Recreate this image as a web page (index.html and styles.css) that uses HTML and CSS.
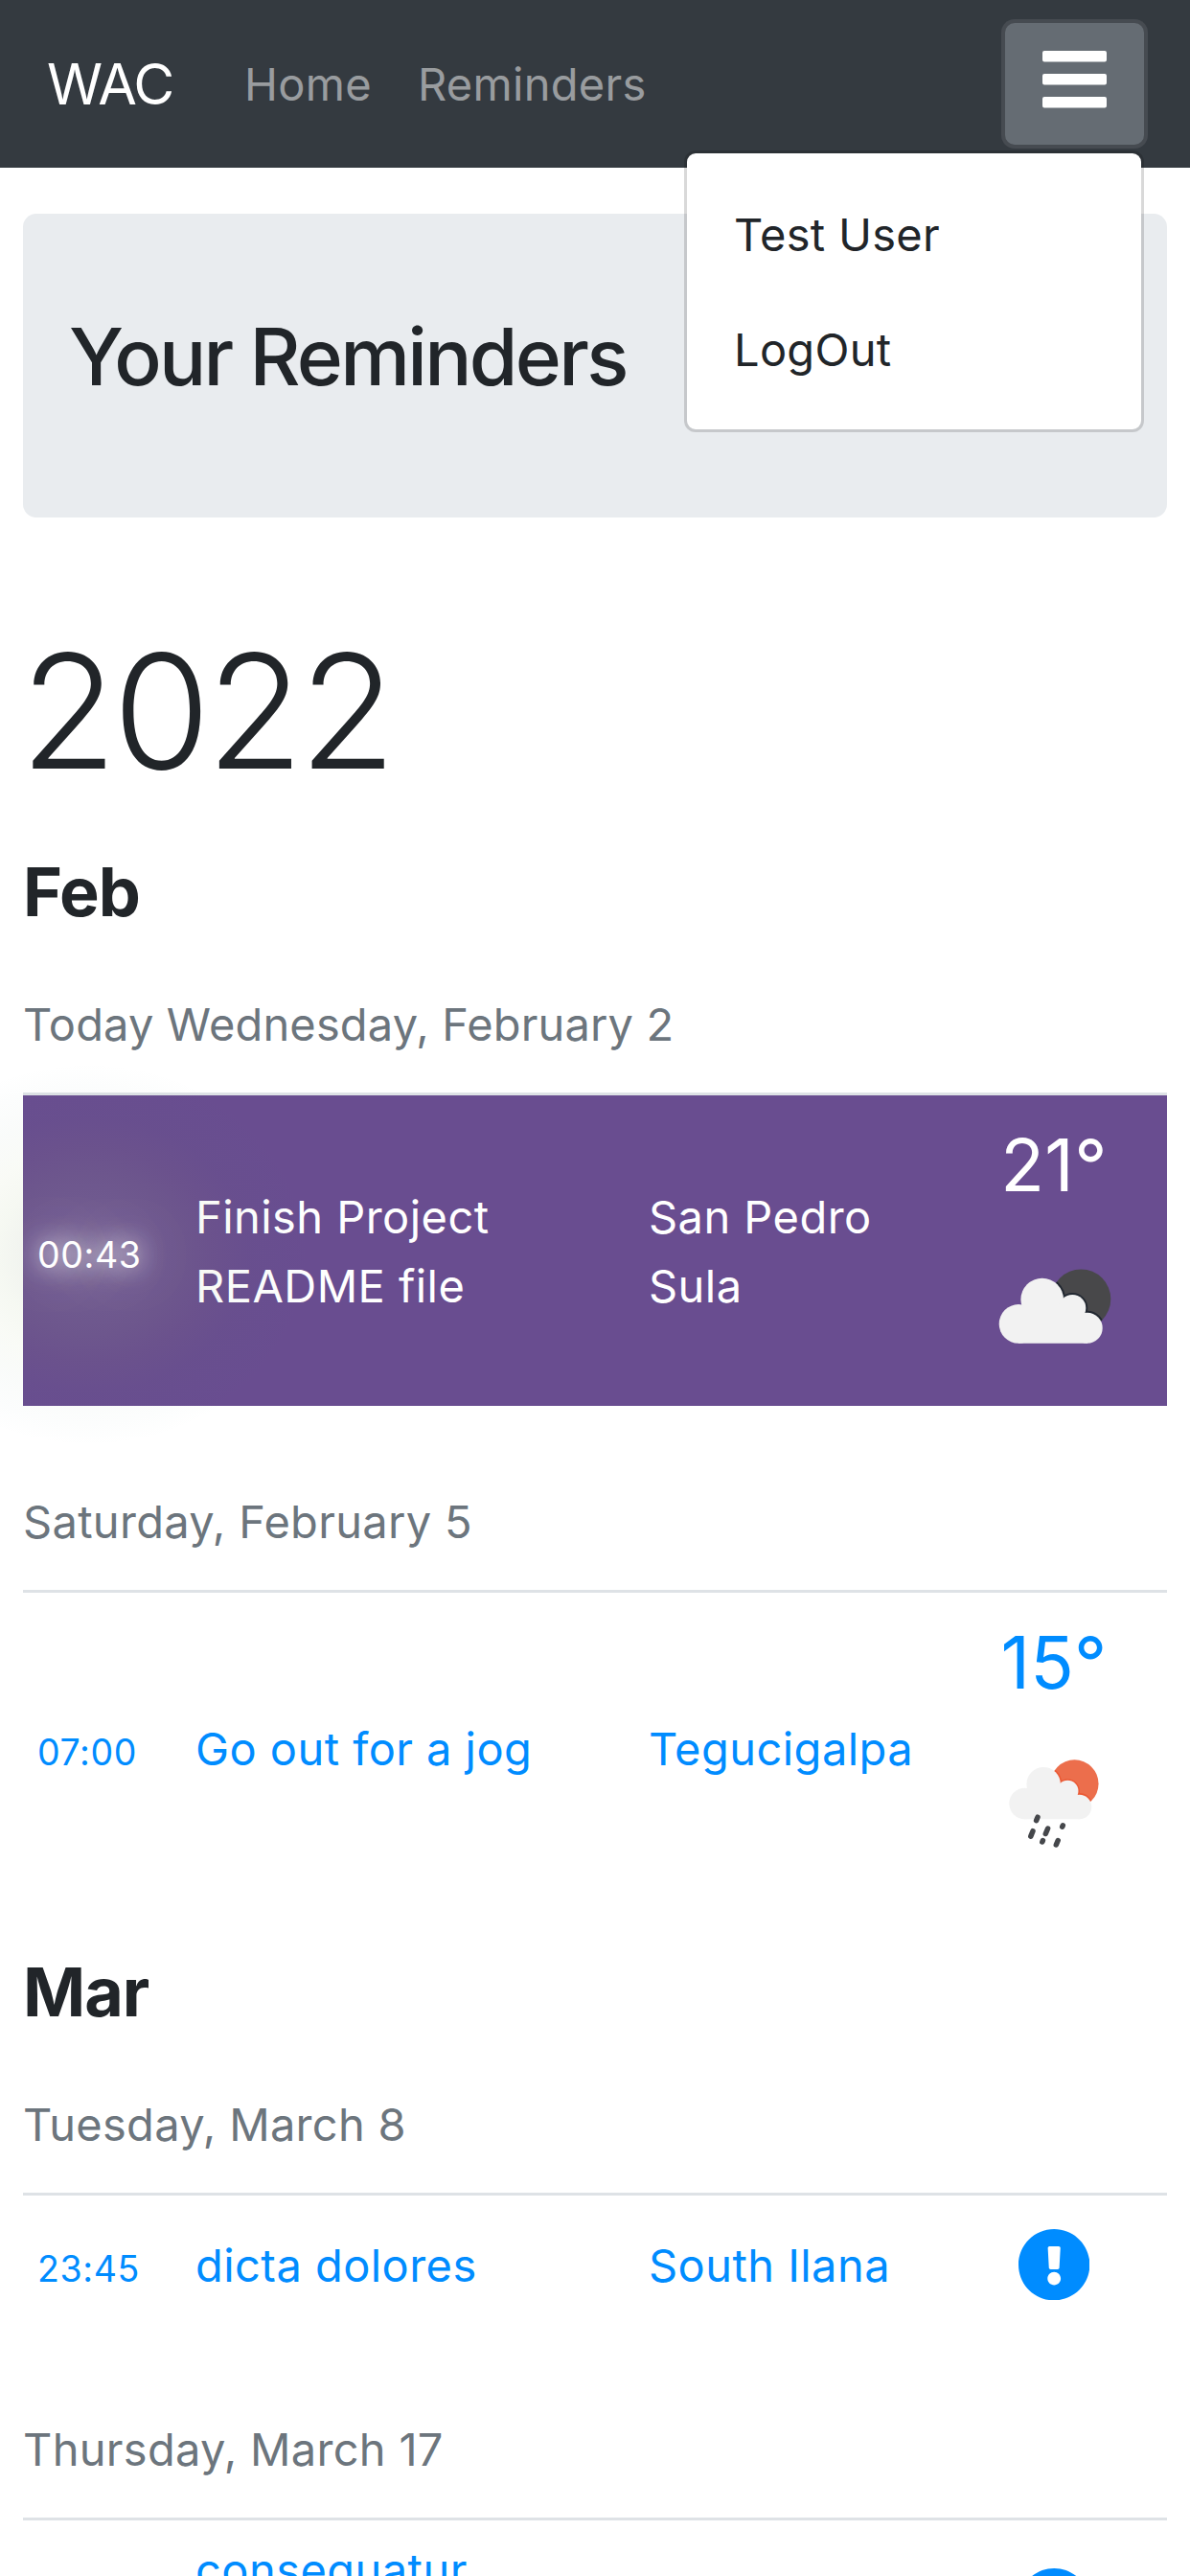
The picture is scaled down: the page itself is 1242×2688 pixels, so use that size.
FILE: index.html
```html
<!DOCTYPE html>
<html lang="en">
<head>
<meta charset="utf-8">
<title>Your Reminders</title>
<link rel="stylesheet" href="styles.css">
</head>
<body>
<nav class="navbar">
  <a class="brand">WAC</a>
  <a class="nav-link nav-home">Home</a>
  <a class="nav-link nav-reminders">Reminders</a>
  <div class="menu">
    <button class="menu-button" aria-label="Menu">
      <svg class="bars" viewBox="0 0 67 60"><path fill="#fff" d="M2 0h63a2 2 0 0 1 2 2v7.500a2 2 0 0 1-2 2H2a2 2 0 0 1-2-2V2a2 2 0 0 1 2-2zM2 24h63a2 2 0 0 1 2 2v7.500a2 2 0 0 1-2 2H2a2 2 0 0 1-2-2V26a2 2 0 0 1 2-2zM2 48h63a2 2 0 0 1 2 2v7.500a2 2 0 0 1-2 2H2a2 2 0 0 1-2-2V50a2 2 0 0 1 2-2z"/></svg>
    </button>
    <div class="dropdown">
      <a class="dropdown-item item-user">Test User</a>
      <a class="dropdown-item item-logout">LogOut</a>
    </div>
  </div>
</nav>
<main class="container">
  <header class="jumbotron"><h1 class="title">Your Reminders</h1></header>
  <h2 class="year">2022</h2>

  <h3 class="month">Feb</h3>
  <section class="day">
    <p class="date date-today">Today Wednesday, February 2</p>
    <div class="reminder current">
      <span class="time time-glow">00:43</span>
      <span class="text">Finish Project README file</span>
      <span class="city">San Pedro Sula</span>
      <span class="weather">
        <span class="temp">21°</span>
        <svg class="sky" viewBox="0 0 180 180">
          <defs>
            <g id="cloud">
              <circle cx="53" cy="108.400" r="20.300"/>
              <circle cx="77.700" cy="83" r="22.300"/>
              <circle cx="109.300" cy="92" r="14"/>
              <circle cx="124.700" cy="112.700" r="16"/>
              <path d="M53 90h56v6l16 12v20.700H53z"/>
            </g>
            <clipPath id="disc"><circle cx="118.300" cy="82.500" r="31"/></clipPath>
          </defs>
          <circle cx="118.300" cy="82.500" r="31" fill="#48484a"/>
          <g clip-path="url(#disc)"><use href="#cloud" fill="#222831" stroke="#222831" stroke-width="4"/></g>
          <use href="#cloud" fill="#f2f2f2"/>
        </svg>
      </span>
    </div>
  </section>
  <section class="day">
    <p class="date">Saturday, February 5</p>
    <div class="reminder">
      <span class="time">07:00</span>
      <span class="text">Go out for a jog</span>
      <span class="city">Tegucigalpa</span>
      <span class="weather">
        <span class="temp">15°</span>
        <svg class="sky" viewBox="0 0 180 180">
          <g transform="translate(17.300 3.700) scale(.796)">
            <circle cx="118.300" cy="82.500" r="31.500" fill="#ec6e4c"/>
            <g clip-path="url(#disc)"><use href="#cloud" fill="#eb5a35" stroke="#eb5a35" stroke-width="4"/></g>
            <use href="#cloud" fill="#f2f2f2"/>
          </g>
          <path d="M73 104.200l-1.400 3.400M68 118.700l-2.200 5.400M83.600 116l-2.300 5.500M99.300 112.800l-.6 1.400M78.400 128.600l-.6 1.400M94.200 128.500l-1.900 4.500" fill="none" stroke="#45474b" stroke-width="5.500" stroke-linecap="round"/>
        </svg>
      </span>
    </div>
  </section>

  <h3 class="month">Mar</h3>
  <section class="day">
    <p class="date">Tuesday, March 8</p>
    <div class="reminder">
      <span class="time">23:45</span>
      <span class="text">dicta dolores</span>
      <span class="city">South Ilana</span>
      <span class="weather"><span class="alert"><svg class="alert-icon" viewBox="8 8 496 496"><path fill="currentColor" d="M504 256c0 137-111 248-248 248S8 393 8 256 119 8 256 8s248 111 248 248zm-248 50c-25.400 0-46 20.600-46 46s20.600 46 46 46 46-20.600 46-46-20.600-46-46-46zm-43.700-165.300l7.400 136c.3 6.400 5.600 11.300 12 11.300h48.500c6.400 0 11.600-5 12-11.300l7.400-136c.4-6.900-5.100-12.700-12-12.700h-63.400c-6.900 0-12.300 5.800-11.900 12.700z"/></svg></span></span>
    </div>
  </section>
  <section class="day">
    <p class="date">Thursday, March 17</p>
    <div class="reminder">
      <span class="time"></span>
      <span class="text">consequatur<br>&nbsp;</span>
      <span class="city"></span>
      <span class="weather"><span class="alert"><svg class="alert-icon" viewBox="8 8 496 496"><path fill="currentColor" d="M504 256c0 137-111 248-248 248S8 393 8 256 119 8 256 8s248 111 248 248zm-248 50c-25.400 0-46 20.600-46 46s20.600 46 46 46 46-20.600 46-46-20.600-46-46-46zm-43.700-165.300l7.400 136c.3 6.400 5.600 11.300 12 11.300h48.500c6.400 0 11.600-5 12-11.300l7.400-136c.4-6.900-5.100-12.700-12-12.700h-63.400c-6.900 0-12.300 5.800-11.900 12.700z"/></svg></span></span>
    </div>
  </section>
</main>
</body>
</html>
```
FILE: styles.css
```css
* { box-sizing: border-box; margin: 0; padding: 0; }
html { height: 2688px; overflow: hidden; }
body {
  height: 2688px;
  overflow: hidden;
  background: #fff;
  color: #212529;
  font-family: Inter, "Liberation Sans", sans-serif;
  font-size: 47px;
  letter-spacing: .3px;
  line-height: 72px;
}
.navbar {
  display: flex;
  align-items: center;
  height: 175px;
  padding: 0 48px 0 49px;
  background: #343a40;
}
.brand { width: 206px; color: #fff; font-size: 59px; letter-spacing: -1.6px; }
.nav-link { width: 181px; color: rgba(255, 255, 255, .5); }
.menu { position: relative; margin-left: auto; }
.menu-button {
  display: flex;
  justify-content: center;
  align-items: flex-start;
  width: 145px;
  height: 127px;
  padding-top: 29px;
  border: 0;
  border-radius: 10px;
  background: #656c73;
  box-shadow: 0 0 0 4px #464b51;
}
.bars { width: 67px; height: 60px; }
.dropdown {
  position: absolute;
  z-index: 2;
  top: 133px;
  right: 0;
  width: 480px;
  height: 294px;
  padding: 49px;
  border: 3px solid rgba(0, 0, 0, .15);
  border-radius: 12px;
  background: #fff;
  background-clip: padding-box;
}
.dropdown-item { display: block; margin-bottom: 48px; white-space: nowrap; }
.container { padding: 48px 24px 0; }
.jumbotron {
  display: flex;
  align-items: center;
  height: 317px;
  padding: 0 48px 18px;
  border-radius: 14px;
  background: #e9ecef;
}
.title { font-size: 82px; font-weight: 500; letter-spacing: -2.75px; }
.year { margin: 102px 0 0 -3px; font-size: 165px; font-weight: 300; letter-spacing: -4.400px; line-height: 201px; }
.month { padding: 50px 0 59px; font-size: 70px; font-weight: 700; letter-spacing: -1px; line-height: 86px; }
.year + .month { padding-top: 45px; }
.date { padding-bottom: 35px; color: #6c757d; white-space: nowrap; }
.date-today { letter-spacing: .15px; }
.day + .day { padding-top: 85px; }
.reminder {
  display: grid;
  grid-template-columns: 165px 473px 320px 236px;
  align-items: center;
  border-top: 3px solid #dee2e6;
  padding: 14.4px 0;
  color: #008cff;
}
.current { color: #fff; background: #694d90; background-clip: padding-box; }
.time, .text, .city { padding: 2px 0 0 15px; }
.text, .city { letter-spacing: .45px; }
.time { padding-top: 10px; font-size: 37.500px; letter-spacing: .6px; }
.time-glow {
  position: relative;
  z-index: 0;
  text-shadow: 0 0 21px rgba(255, 255, 255, .6), 0 0 30px rgba(255, 255, 255, .7), 0 0 63px rgba(255, 255, 255, .8);
}
/* Halo that spreads past the row's edges */
.time-glow::before {
  content: "";
  position: absolute;
  z-index: -1;
  top: 50%;
  left: 69px;
  width: 460px;
  height: 400px;
  margin: -196px 0 0 -230px;
  background: radial-gradient(closest-side, rgba(170, 180, 160, .22), rgba(150, 165, 140, .15) 25%, rgba(150, 180, 110, .09) 42%, rgba(140, 170, 80, .05) 56%, rgba(80, 130, 90, .03) 72%, rgba(60, 130, 120, .015) 88%, rgba(60, 130, 120, 0));
}
.weather { display: flex; flex-direction: column; align-items: center; }
.temp { padding-top: 2px; font-size: 75px; line-height: 113.200px; }
.sky { display: block; width: 180px; height: 180px; }
.alert { display: flex; align-items: center; height: 115.200px; }
.alert-icon { width: 74.400px; height: 74.400px; }
```
